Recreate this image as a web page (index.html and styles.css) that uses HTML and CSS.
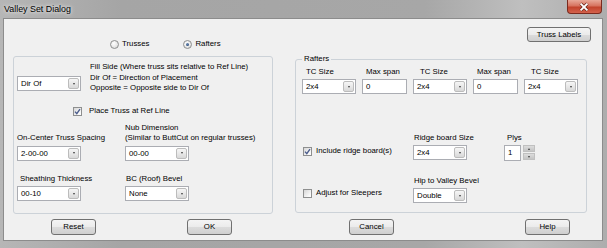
FILE: index.html
```html
<!DOCTYPE html>
<html lang="en">
<head>
    <meta charset="UTF-8">
    <meta name="viewport" content="width=device-width, initial-scale=1.0">
    <title>Valley Set Dialog</title>
    <link rel="stylesheet" href="styles.css">
</head>
<body>
    <div class="window">
        <div class="titlebar">
            <span class="title">Valley Set Dialog</span>
            <div class="close">
                <svg width="35" height="14" viewBox="0 0 35 14">
                    <path d="M14 3.5 L21 10.5 M21 3.5 L14 10.5" stroke="#6a2418" stroke-width="3.4" fill="none"/>
                    <path d="M14 3.5 L21 10.5 M21 3.5 L14 10.5" stroke="#ffffff" stroke-width="2" fill="none"/>
                </svg>
            </div>
        </div>

        <div class="client">
            <div class="top-row">
                <div class="radios">
                    <label class="radio"><span class="radio-mark"></span>Trusses</label>
                    <label class="radio"><span class="radio-mark checked"></span>Rafters</label>
                </div>
                <button class="btn btn-labels">Truss Labels</button>
            </div>

            <div class="main-row">
                <!-- placement options -->
                <div class="group group-left">
                    <div class="fill-row">
                        <div class="combo combo-l">
                            <span class="combo-text">Dir Of</span>
                            <span class="combo-btn"><i class="arrow"></i></span>
                        </div>
                        <div class="fill-text">
                            <div>Fill Side (Where truss sits relative to Ref Line)</div>
                            <div>Dir Of = Direction of Placement</div>
                            <div>Opposite = Opposite side to Dir Of</div>
                        </div>
                    </div>

                    <label class="check-row place-row">
                        <span class="check-box checked">
                            <svg width="7" height="7" viewBox="0 0 7 7"><path d="M1 3.6 L2.8 5.6 L6 1.2" stroke="#4b5c8c" stroke-width="1.4" fill="none"/></svg>
                        </span>
                        Place Truss at Ref Line
                    </label>

                    <div class="field-grid">
                        <div class="lbl-end">On-Center Truss Spacing</div>
                        <div>Nub Dimension<br>(Similar to ButtCut on regular trusses)</div>
                        <div class="combo combo-l">
                            <span class="combo-text">2-00-00</span>
                            <span class="combo-btn"><i class="arrow"></i></span>
                        </div>
                        <div class="combo combo-l">
                            <span class="combo-text">00-00</span>
                            <span class="combo-btn"><i class="arrow"></i></span>
                        </div>
                        <div class="lbl-gap lbl-sheath">Sheathing Thickness</div>
                        <div class="lbl-gap lbl-bevel">BC (Roof) Bevel</div>
                        <div class="combo combo-l">
                            <span class="combo-text">00-10</span>
                            <span class="combo-btn"><i class="arrow"></i></span>
                        </div>
                        <div class="combo combo-l">
                            <span class="combo-text">None</span>
                            <span class="combo-btn"><i class="arrow"></i></span>
                        </div>
                    </div>
                </div>

                <!-- rafter sizes -->
                <fieldset class="group group-right">
                    <legend>Rafters</legend>
                    <div class="size-row">
                        <div class="field">
                            <div class="lbl">TC Size</div>
                            <div class="combo combo-s">
                                <span class="combo-text">2x4</span>
                                <span class="combo-btn"><i class="arrow"></i></span>
                            </div>
                        </div>
                        <div class="field">
                            <div class="lbl">Max span</div>
                            <div class="textbox">0</div>
                        </div>
                        <div class="field">
                            <div class="lbl indent">TC Size</div>
                            <div class="combo combo-s">
                                <span class="combo-text">2x4</span>
                                <span class="combo-btn"><i class="arrow"></i></span>
                            </div>
                        </div>
                        <div class="field">
                            <div class="lbl">Max span</div>
                            <div class="textbox">0</div>
                        </div>
                        <div class="field">
                            <div class="lbl indent">TC Size</div>
                            <div class="combo combo-s">
                                <span class="combo-text">2x4</span>
                                <span class="combo-btn"><i class="arrow"></i></span>
                            </div>
                        </div>
                    </div>

                    <div class="lower-grid">
                        <label class="check-row cell-check">
                            <span class="check-box checked">
                                <svg width="7" height="7" viewBox="0 0 7 7"><path d="M1 3.6 L2.8 5.6 L6 1.2" stroke="#4b5c8c" stroke-width="1.4" fill="none"/></svg>
                            </span>
                            Include ridge board(s)
                        </label>
                        <div class="field">
                            <div class="lbl-row">Ridge board Size</div>
                            <div class="combo combo-s">
                                <span class="combo-text">2x4</span>
                                <span class="combo-btn"><i class="arrow"></i></span>
                            </div>
                        </div>
                        <div class="field">
                            <div class="lbl-row lbl-plys">Plys</div>
                            <div class="numeric">
                                <div class="textbox num-box">1</div>
                                <div class="spin">
                                    <span class="spin-btn"><i class="arrow up"></i></span>
                                    <span class="spin-btn"><i class="arrow"></i></span>
                                </div>
                            </div>
                        </div>

                        <label class="check-row cell-check">
                            <span class="check-box"></span>
                            Adjust for Sleepers
                        </label>
                        <div class="field">
                            <div class="lbl-row">Hip to Valley Bevel</div>
                            <div class="combo combo-s">
                                <span class="combo-text">Double</span>
                                <span class="combo-btn"><i class="arrow"></i></span>
                            </div>
                        </div>
                    </div>
                </fieldset>
            </div>

            <div class="bottom-row">
                <button class="btn btn-reset">Reset</button>
                <button class="btn btn-ok">OK</button>
                <button class="btn btn-cancel">Cancel</button>
                <button class="btn btn-help">Help</button>
            </div>
        </div>
    </div>
</body>
</html>
```

FILE: styles.css
```css
body {
    margin: 0;
    font-family: "Liberation Sans", Arial, sans-serif;
    font-size: 7.8px;
    color: #000;
    white-space: nowrap;
}
.window {
    width: 607px;
    height: 248px;
    background: linear-gradient(90deg, #b6b6b6 0%, #a5a5a5 20%, #a7a7a7 70%, #bfbfbf 86%, #adadad 100%);
    overflow: hidden;
}
.titlebar {
    height: 18px;
    display: flex;
    align-items: flex-start;
}
.title {
    padding-left: 4px;
    line-height: 19px;
    font-size: 8.9px;
    text-shadow: 0 0 5px #e8e8e8, 0 0 3px #e8e8e8;
}
.close {
    margin-left: auto;
    margin-right: 5px;
    width: 35px;
    height: 14px;
    box-sizing: border-box;
    border: 1px solid #7a2a1e;
    border-top: none;
    border-radius: 0 0 4px 4px;
    background: linear-gradient(180deg, #e8a898 0%, #d7735f 45%, #c2432c 55%, #d4624c 100%);
    display: flex;
}
.close svg {
    margin-left: -1px;
}

.client {
    margin-left: 3px;
    width: 600px;
    height: 223px;
    box-sizing: border-box;
    border: 1px solid #8c8c8c;
    background-color: #f0f0f0;
}
.top-row {
    height: 35px;
    display: flex;
    align-items: flex-start;
}
.radios {
    display: flex;
    margin-left: 106px;
    margin-top: 20px;
    line-height: 10px;
}
.radio {
    display: flex;
    align-items: center;
    gap: 3px;
}
.radio + .radio {
    margin-left: 34px;
}
.radio-mark {
    width: 9px;
    height: 9px;
    box-sizing: border-box;
    border: 1px solid #8e8f8f;
    border-radius: 50%;
    background: radial-gradient(circle at 40% 35%, #ffffff 0%, #e6e6e6 60%, #cfcfcf 100%);
    display: flex;
    align-items: center;
    justify-content: center;
}
.radio-mark.checked::after {
    content: "";
    width: 3px;
    height: 3px;
    border-radius: 50%;
    background: radial-gradient(circle at 40% 35%, #6b8bb8 0%, #1d3b64 100%);
}

.btn {
    font: inherit;
    padding: 0;
    height: 16px;
    box-sizing: border-box;
    border: 1px solid #707070;
    border-radius: 3px;
    background: linear-gradient(180deg, #f4f4f4 0%, #ebebeb 50%, #dcdcdc 51%, #cfcfcf 100%);
    color: #000;
    line-height: 14px;
}
.btn-labels {
    width: 64px;
    height: 15px;
    line-height: 13px;
    margin-left: auto;
    margin-right: 11px;
    margin-top: 8px;
}

.main-row {
    display: flex;
    align-items: flex-start;
}
.group {
    box-sizing: border-box;
    border: 1px solid #ccd2d8;
    border-radius: 3px;
}
.group-left {
    width: 260px;
    height: 158px;
    margin-left: 9px;
    margin-top: 2px;
    line-height: 10.5px;
}
.fill-row {
    display: flex;
    align-items: flex-start;
}
.fill-row .combo {
    margin-left: 3px;
    margin-top: 19px;
}
.fill-text {
    margin-left: 9px;
    margin-top: 5px;
}
.check-row {
    display: flex;
    align-items: center;
    gap: 7px;
    line-height: 10.5px;
}
.place-row {
    margin-top: 12.5px;
    margin-left: 59px;
}
.check-box {
    width: 9px;
    height: 9px;
    box-sizing: border-box;
    border: 1px solid #8e8f8f;
    background: linear-gradient(135deg, #d6d6d6 0%, #f6f6f6 70%, #ffffff 100%);
    display: flex;
    align-items: center;
    justify-content: center;
}
.field-grid {
    display: grid;
    grid-template-columns: 108px 108px;
    row-gap: 2px;
    margin-left: 3px;
    margin-top: 6.25px;
}
.lbl-end {
    align-self: end;
}
.lbl-gap {
    margin-top: 11px;
}
.lbl-sheath {
    padding-left: 3px;
}
.lbl-bevel {
    padding-left: 1px;
}

.combo {
    height: 15px;
    box-sizing: border-box;
    border: 1px solid #abadb3;
    background-color: #fff;
    display: flex;
    align-items: center;
}
.combo-l {
    width: 64px;
}
.combo-s {
    width: 54px;
}
.combo-text {
    flex: 1;
    padding-left: 3px;
    line-height: 13px;
}
.combo-btn {
    width: 11px;
    height: 11px;
    margin-right: 1px;
    box-sizing: border-box;
    border: 1px solid #bcbcbc;
    border-radius: 2px;
    background: linear-gradient(180deg, #f6f6f6 0%, #e8e8e8 50%, #d8d8d8 100%);
    display: flex;
    align-items: center;
    justify-content: center;
}
.arrow {
    width: 0;
    height: 0;
    border-left: 1.5px solid transparent;
    border-right: 1.5px solid transparent;
    border-top: 2px solid #3c3c3c;
}
.arrow.up {
    border-top: none;
    border-bottom: 2px solid #3c3c3c;
}
.textbox {
    height: 15px;
    box-sizing: border-box;
    border: 1px solid #abadb3;
    background-color: #fff;
    padding-left: 3px;
    line-height: 13px;
}

.group-right {
    width: 292px;
    height: 159px;
    margin: 0 0 0 22px;
    padding: 0;
    min-width: 0;
}
.group-right legend {
    margin-left: 6px;
    padding: 0 2px;
    line-height: 10px;
}
.size-row {
    display: flex;
    gap: 6px;
    margin-left: 6px;
    margin-top: 3px;
}
.field {
    display: flex;
    flex-direction: column;
}
.size-row .textbox {
    width: 45px;
}
.lbl {
    line-height: 10px;
    padding-left: 4px;
    margin-bottom: 2px;
}
.lbl.indent {
    padding-left: 7px;
}
.lower-grid {
    display: grid;
    grid-template-columns: 110px 91px auto;
    row-gap: 15px;
    margin-left: 7px;
    margin-top: 39px;
}
.cell-check {
    align-self: end;
    height: 15px;
    margin-bottom: 2px;
    gap: 4px;
}
.lbl-row {
    line-height: 10px;
    margin-bottom: 2px;
    padding-left: 1px;
}
.lbl-plys {
    padding-left: 3px;
}
.numeric {
    display: flex;
    gap: 2px;
}
.num-box {
    width: 17px;
    height: 16px;
    line-height: 14px;
}
.spin {
    display: flex;
    flex-direction: column;
    gap: 1px;
}
.spin-btn {
    width: 12px;
    height: 7px;
    box-sizing: border-box;
    background: linear-gradient(180deg, #dcdcdc, #c4c4c4);
    border: 1px solid #c0c0c0;
    display: flex;
    align-items: center;
    justify-content: center;
}

.bottom-row {
    display: flex;
    margin-top: 5px;
}
.bottom-row .btn {
    width: 45px;
}
.btn-reset {
    margin-left: 47px;
}
.btn-ok {
    margin-left: 91px;
}
.btn-cancel {
    margin-left: 117px;
}
.btn-help {
    margin-left: 131px;
}
```
